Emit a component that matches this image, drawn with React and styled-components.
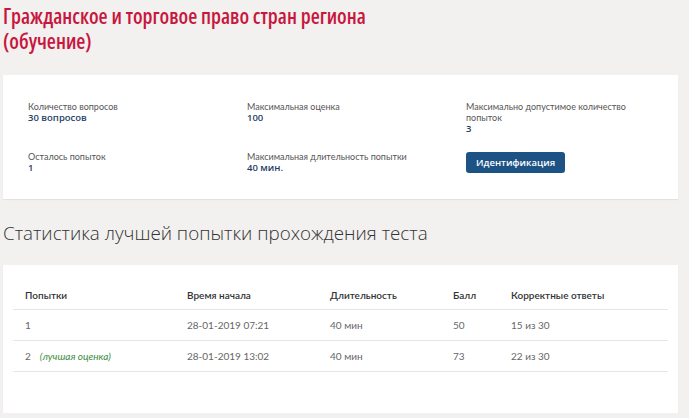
import styled, { createGlobalStyle } from "styled-components";

const GlobalStyle = createGlobalStyle`
  html, body {
    margin: 0;
    padding: 0;
    background: #f2f1ef;
  }
  body {
    font-family: "Open Sans", "Liberation Sans", sans-serif;
  }
`;

const Page = styled.div`
  width: 675px;
  padding: 4px 11px 0 3px;
`;

const Title = styled.h1`
  margin: 0;
  font-family: "Open Sans", sans-serif;
  font-stretch: 75%;
  font-weight: 600;
  font-size: 20.8px;
  line-height: 25px;
  color: #c8173f;
`;

const Card = styled.div`
  background: #fff;
  box-shadow: 0 1px 1px rgba(0, 0, 0, 0.06);
`;

const InfoCard = styled(Card)`
  margin-top: 21px;
  padding: 26px 0 25px 25px;
  display: grid;
  grid-template-columns: 219px 219px 160px;
  row-gap: 16px;
`;

const Field = styled.div`
  display: flex;
  flex-direction: column;
  align-items: flex-start;
`;

const Label = styled.span`
  font-family: Lato, "Open Sans", sans-serif;
  font-size: 9px;
  line-height: 11px;
  color: #555;
`;

const Value = styled.span`
  font-size: 9.5px;
  line-height: 12px;
  font-weight: 600;
  color: #1f3f66;
`;

const Button = styled.button`
  margin-top: 1px;
  height: 21px;
  padding: 0 10px;
  border: none;
  border-radius: 3px;
  background: #1d5285;
  color: #fff;
  font-family: "Open Sans", sans-serif;
  font-size: 9.5px;
  font-weight: 600;
`;

const Heading = styled.h2`
  margin: 22px 0 0;
  font-family: "Open Sans", sans-serif;
  font-weight: 300;
  font-size: 18.8px;
  line-height: 24px;
  color: #333;
`;

const TableCard = styled(Card)`
  margin-top: 20px;
  padding: 13px 10px 41px;
`;

const Table = styled.table`
  width: 100%;
  border-collapse: collapse;
  font-family: Lato, "Open Sans", sans-serif;
  font-size: 10px;
`;

const Th = styled.th`
  text-align: left;
  vertical-align: bottom;
  font-weight: 600;
  color: #333;
  padding: 0 0 8px 12px;
  height: 31px;
  box-sizing: border-box;
  border-bottom: 1px solid #e6e6e6;
  width: ${(p) => p.$w || "auto"};
`;

const Td = styled.td`
  color: #666;
  padding: 0 0 0 12px;
  height: 30px;
  border-bottom: 1px solid #e6e6e6;
`;

const Best = styled.em`
  margin-left: 9px;
  color: #3d8b3d;
`;

const rows = [
  { n: "1", best: false, start: "28-01-2019 07:21", dur: "40 мин", score: "50", ok: "15 из 30" },
  { n: "2", best: true, start: "28-01-2019 13:02", dur: "40 мин", score: "73", ok: "22 из 30" },
];

export default function App() {
  return (
    <Page>
      <GlobalStyle />
      <Title>
        Гражданское и торговое право стран региона
        <br />
        (обучение)
      </Title>
      <InfoCard>
        <Field>
          <Label>Количество вопросов</Label>
          <Value>30 вопросов</Value>
        </Field>
        <Field>
          <Label>Максимальная оценка</Label>
          <Value>100</Value>
        </Field>
        <Field>
          <Label>Максимально допустимое количество попыток</Label>
          <Value>3</Value>
        </Field>
        <Field>
          <Label>Осталось попыток</Label>
          <Value>1</Value>
        </Field>
        <Field>
          <Label>Максимальная длительность попытки</Label>
          <Value>40 мин.</Value>
        </Field>
        <Field>
          <Button>Идентификация</Button>
        </Field>
      </InfoCard>
      <Heading>Статистика лучшей попытки прохождения теста</Heading>
      <TableCard>
        <Table>
          <thead>
            <tr>
              <Th $w="162px">Попытки</Th>
              <Th $w="143px">Время начала</Th>
              <Th $w="123px">Длительность</Th>
              <Th $w="58px">Балл</Th>
              <Th>Корректные ответы</Th>
            </tr>
          </thead>
          <tbody>
            {rows.map((r) => (
              <tr key={r.n}>
                <Td>
                  {r.n}
                  {r.best && <Best>(лучшая оценка)</Best>}
                </Td>
                <Td>{r.start}</Td>
                <Td>{r.dur}</Td>
                <Td>{r.score}</Td>
                <Td>{r.ok}</Td>
              </tr>
            ))}
          </tbody>
        </Table>
      </TableCard>
    </Page>
  );
}
